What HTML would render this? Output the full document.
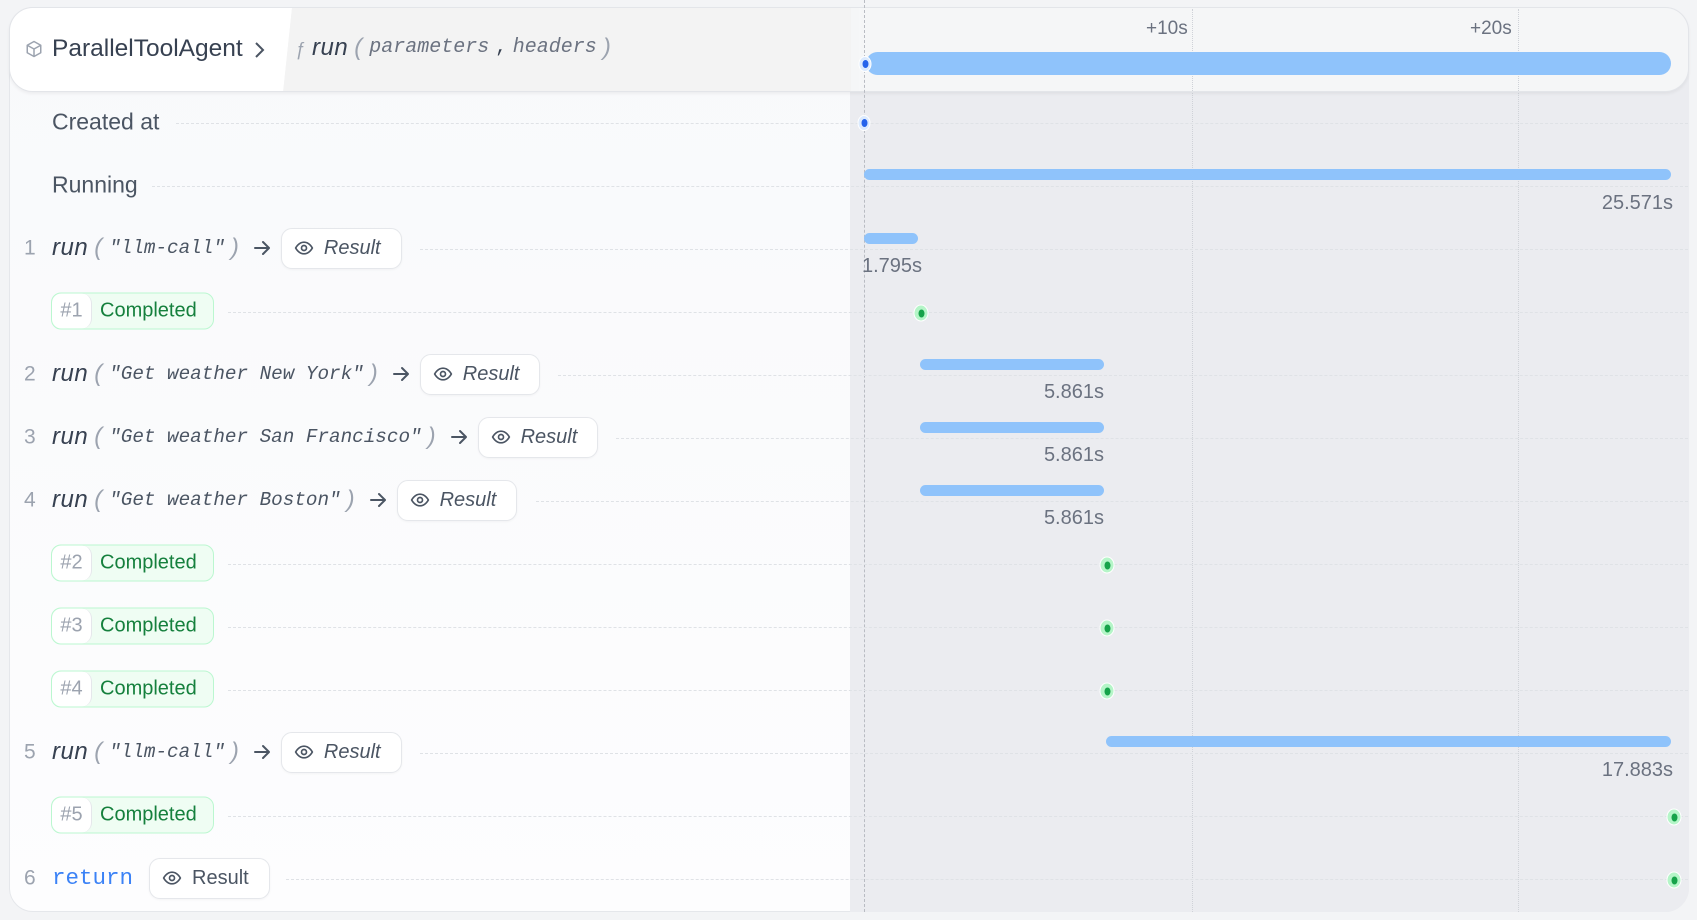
<!DOCTYPE html>
<html><head><meta charset="utf-8">
<style>
*{box-sizing:border-box;margin:0;padding:0}
body{width:1697px;height:920px;background:#f3f4f6;font-family:"Liberation Sans",sans-serif;position:relative;overflow:hidden}
.card{position:absolute;left:9px;top:7px;width:1680px;height:905px;border-radius:24px;background:linear-gradient(180deg,#f8f9fb,#fdfdfe);border:1px solid #e5e7eb;overflow:hidden}
.tl{position:absolute;left:850px;top:7px;width:839px;height:905px;background:#ebecf0;border-radius:0 24px 24px 0}
.hdr{position:absolute;left:9px;top:7px;width:1680px;height:85px;border-radius:24px;background:#f2f3f5;border:1px solid #e3e5e9;box-shadow:0 2px 3px rgba(0,0,0,.05);overflow:hidden}
.hw{position:absolute;left:0;top:0;width:282px;height:85px;background:#fff;clip-path:polygon(0 0,282px 0,273px 85px,0 85px)}
.hg{position:absolute;left:273px;top:0;width:578px;height:85px;background:#f3f3f3;border-right:2px solid #f9f9f9;clip-path:polygon(9px 0,578px 0,578px 85px,0 85px)}
.abs{position:absolute}
.lbl{position:absolute;left:52px;font-size:23px;color:#4b5563;transform:translateY(-50%);line-height:1}
.num{position:absolute;left:24px;font-size:21px;color:#9ca3af;transform:translateY(-50%);line-height:1}
.row{position:absolute;left:52px;display:flex;align-items:center;transform:translateY(-50%);height:42px}
.run{font-style:italic;font-size:24px;color:#374151;letter-spacing:0.5px}
.par{font-size:24px;color:#9ca3af;font-style:italic;margin:0 7px 0 6px}
.mono{font-family:"Liberation Mono",monospace;font-style:italic;font-size:19.3px;color:#4b5563}
.arr{margin:0 9px 0 6px;display:flex}
.btn{height:41px;border:1px solid #e5e7eb;background:#fff;border-radius:11px;display:flex;align-items:center;padding:0 20px 0 12px;font-size:20px;color:#4b5563;box-shadow:0 1px 2px rgba(0,0,0,.04)}
.btn.i span{font-style:italic}
.btn svg{margin-right:10px}
.badge{position:absolute;left:51px;height:37px;width:163px;transform:translateY(-50%);display:flex;border:1px solid #bbf7d0;border-radius:10px;background:#effdf3;overflow:hidden}
.badge .h{width:40px;background:#fff;border-right:1px solid #e5e7eb;border-radius:10px;display:flex;align-items:center;justify-content:center;color:#9ca3af;font-size:20px}
.badge .c{flex:1;display:flex;align-items:center;padding-left:8px;color:#15803d;font-size:20px}
.dash{position:absolute;height:0;border-top:1px dashed #dfe2e6;right:9px}
.bar{position:absolute;height:11px;background:#8fc3fb;border-radius:6px}
.dur{position:absolute;font-size:20px;color:#6b7280;transform:translateY(-50%);line-height:1}
.gd{position:absolute;width:15px;height:17px;border-radius:50%;background:#b5f5c8;border:1.5px solid #fff;transform:translate(-50%,-50%)}
.gd::after{content:"";position:absolute;left:50%;top:50%;width:6px;height:8px;border-radius:50%;background:#16a34a;transform:translate(-50%,-50%)}
.bd{position:absolute;width:13px;height:16px;border-radius:50%;background:#dbeafe;border:1.5px solid #fff;transform:translate(-50%,-50%)}
.bd::after{content:"";position:absolute;left:50%;top:50%;width:6px;height:8px;border-radius:50%;background:#2563eb;transform:translate(-50%,-50%)}
</style></head><body>
<div class="card"></div>
<div class="tl"></div>
<div class="abs" style="left:1192px;top:10px;height:902px;border-left:1px dotted #cfd2d8"></div>
<div class="abs" style="left:1518px;top:10px;height:902px;border-left:1px dotted #cfd2d8"></div>
<div class="hdr"><div class="hw"></div><div class="hg"></div>
<div class="abs" style="left:841px;top:0;width:839px;height:85px;background:rgba(245,246,248,.8)"></div>
</div>
<div class="abs" style="left:1192px;top:9px;height:82px;border-left:1px dotted #cfd2d8"></div>
<div class="abs" style="left:1518px;top:9px;height:82px;border-left:1px dotted #cfd2d8"></div>
<div class="abs" style="left:864px;top:0;height:912px;border-left:1px dashed #b9bcc3"></div>
<svg class="abs" style="left:25px;top:40px" width="18" height="18" viewBox="0 0 24 24" fill="none" stroke="#9ca3af" stroke-width="2" stroke-linejoin="round"><path d="M12 2 21 7v10l-9 5-9-5V7z"/><path d="M3 7l9 5 9-5M12 12v10"/></svg>
<div class="abs" style="left:52px;top:37px;font-size:24.5px;color:#374151;line-height:1">ParallelToolAgent</div>
<svg class="abs" style="left:253px;top:41px" width="12" height="18" viewBox="0 0 12 18" fill="none" stroke="#4b5563" stroke-width="2"><path d="M3 2l7 7-7 7"/></svg>
<div class="abs" style="left:295px;top:40px;font-size:18px;color:#9ca3af;font-style:italic;line-height:1">ƒ</div>
<div class="abs" style="left:312px;top:36px;display:flex;align-items:center;line-height:1"><span class="run" style="font-size:24px">run</span><span class="par">(</span><span class="mono" style="color:#6b7280;font-size:20px">parameters</span><span class="mono" style="color:#374151;margin:0 6px;font-style:normal">,</span><span class="mono" style="color:#6b7280;font-size:20px">headers</span><span class="par">)</span></div>
<div class="abs" style="left:1146px;top:18px;font-size:19px;color:#6b7280">+10s</div>
<div class="abs" style="left:1470px;top:18px;font-size:19px;color:#6b7280">+20s</div>
<div class="abs" style="left:866px;top:52px;width:805px;height:23px;background:#8fc3fb;border-radius:12px"></div>
<div class="bd" style="left:865px;top:64px"></div>

<div class="dash" style="left:176px;top:123px"></div>
<div class="dash" style="left:152px;top:186px"></div>
<div class="dash" style="left:420px;top:249px"></div>
<div class="dash" style="left:228px;top:312px"></div>
<div class="dash" style="left:558px;top:375px"></div>
<div class="dash" style="left:616px;top:438px"></div>
<div class="dash" style="left:536px;top:501px"></div>
<div class="dash" style="left:228px;top:564px"></div>
<div class="dash" style="left:228px;top:627px"></div>
<div class="dash" style="left:228px;top:690px"></div>
<div class="dash" style="left:420px;top:753px"></div>
<div class="dash" style="left:228px;top:816px"></div>
<div class="dash" style="left:286px;top:879px"></div>

<div class="lbl" style="top:122px">Created at</div>
<div class="bd" style="left:864px;top:123px"></div>
<div class="lbl" style="top:185px">Running</div>
<div class="bar" style="left:864px;top:169px;width:807px"></div>
<div class="dur" style="right:24px;top:203px">25.571s</div>

<div class="num" style="top:248px">1</div>
<div class="row" style="top:248px"><span class="run">run</span><span class="par">(</span><span class="mono">"llm-call"</span><span class="par">)</span><span class="arr"><svg width="20" height="20" viewBox="0 0 20 20" fill="none" stroke="#4b5563" stroke-width="2" stroke-linecap="round" stroke-linejoin="round"><path d="M3 10h14M11 4l6 6-6 6"/></svg></span><div class="btn i"><svg width="20" height="20" viewBox="0 0 24 24" fill="none" stroke="#4b5563" stroke-width="2"><path d="M2 12s3.5-7 10-7 10 7 10 7-3.5 7-10 7S2 12 2 12z"/><circle cx="12" cy="12" r="3"/></svg><span>Result</span></div></div>
<div class="bar" style="left:864px;top:233px;width:54px"></div>
<div class="dur" style="left:862px;top:266px">1.795s</div>

<div class="badge" style="top:311px"><div class="h">#1</div><div class="c">Completed</div></div>
<div class="gd" style="left:921px;top:313px"></div>

<div class="num" style="top:374px">2</div>
<div class="row" style="top:374px"><span class="run">run</span><span class="par">(</span><span class="mono">"Get weather New York"</span><span class="par">)</span><span class="arr"><svg width="20" height="20" viewBox="0 0 20 20" fill="none" stroke="#4b5563" stroke-width="2" stroke-linecap="round" stroke-linejoin="round"><path d="M3 10h14M11 4l6 6-6 6"/></svg></span><div class="btn i"><svg width="20" height="20" viewBox="0 0 24 24" fill="none" stroke="#4b5563" stroke-width="2"><path d="M2 12s3.5-7 10-7 10 7 10 7-3.5 7-10 7S2 12 2 12z"/><circle cx="12" cy="12" r="3"/></svg><span>Result</span></div></div>
<div class="bar" style="left:920px;top:359px;width:184px"></div>
<div class="dur" style="right:593px;top:392px">5.861s</div>

<div class="num" style="top:437px">3</div>
<div class="row" style="top:437px"><span class="run">run</span><span class="par">(</span><span class="mono">"Get weather San Francisco"</span><span class="par">)</span><span class="arr"><svg width="20" height="20" viewBox="0 0 20 20" fill="none" stroke="#4b5563" stroke-width="2" stroke-linecap="round" stroke-linejoin="round"><path d="M3 10h14M11 4l6 6-6 6"/></svg></span><div class="btn i"><svg width="20" height="20" viewBox="0 0 24 24" fill="none" stroke="#4b5563" stroke-width="2"><path d="M2 12s3.5-7 10-7 10 7 10 7-3.5 7-10 7S2 12 2 12z"/><circle cx="12" cy="12" r="3"/></svg><span>Result</span></div></div>
<div class="bar" style="left:920px;top:422px;width:184px"></div>
<div class="dur" style="right:593px;top:455px">5.861s</div>

<div class="num" style="top:500px">4</div>
<div class="row" style="top:500px"><span class="run">run</span><span class="par">(</span><span class="mono">"Get weather Boston"</span><span class="par">)</span><span class="arr"><svg width="20" height="20" viewBox="0 0 20 20" fill="none" stroke="#4b5563" stroke-width="2" stroke-linecap="round" stroke-linejoin="round"><path d="M3 10h14M11 4l6 6-6 6"/></svg></span><div class="btn i"><svg width="20" height="20" viewBox="0 0 24 24" fill="none" stroke="#4b5563" stroke-width="2"><path d="M2 12s3.5-7 10-7 10 7 10 7-3.5 7-10 7S2 12 2 12z"/><circle cx="12" cy="12" r="3"/></svg><span>Result</span></div></div>
<div class="bar" style="left:920px;top:485px;width:184px"></div>
<div class="dur" style="right:593px;top:518px">5.861s</div>

<div class="badge" style="top:563px"><div class="h">#2</div><div class="c">Completed</div></div>
<div class="gd" style="left:1107px;top:565px"></div>
<div class="badge" style="top:626px"><div class="h">#3</div><div class="c">Completed</div></div>
<div class="gd" style="left:1107px;top:628px"></div>
<div class="badge" style="top:689px"><div class="h">#4</div><div class="c">Completed</div></div>
<div class="gd" style="left:1107px;top:691px"></div>

<div class="num" style="top:752px">5</div>
<div class="row" style="top:752px"><span class="run">run</span><span class="par">(</span><span class="mono">"llm-call"</span><span class="par">)</span><span class="arr"><svg width="20" height="20" viewBox="0 0 20 20" fill="none" stroke="#4b5563" stroke-width="2" stroke-linecap="round" stroke-linejoin="round"><path d="M3 10h14M11 4l6 6-6 6"/></svg></span><div class="btn i"><svg width="20" height="20" viewBox="0 0 24 24" fill="none" stroke="#4b5563" stroke-width="2"><path d="M2 12s3.5-7 10-7 10 7 10 7-3.5 7-10 7S2 12 2 12z"/><circle cx="12" cy="12" r="3"/></svg><span>Result</span></div></div>
<div class="bar" style="left:1106px;top:736px;width:565px"></div>
<div class="dur" style="right:24px;top:770px">17.883s</div>

<div class="badge" style="top:815px"><div class="h">#5</div><div class="c">Completed</div></div>
<div class="gd" style="left:1674px;top:817px"></div>

<div class="num" style="top:878px">6</div>
<div class="row" style="top:878px"><span class="mono" style="font-style:normal;color:#3b82f6;font-size:22.5px;margin-right:16px">return</span><div class="btn"><svg width="20" height="20" viewBox="0 0 24 24" fill="none" stroke="#4b5563" stroke-width="2"><path d="M2 12s3.5-7 10-7 10 7 10 7-3.5 7-10 7S2 12 2 12z"/><circle cx="12" cy="12" r="3"/></svg><span>Result</span></div></div>
<div class="gd" style="left:1674px;top:880px"></div>
</body></html>
